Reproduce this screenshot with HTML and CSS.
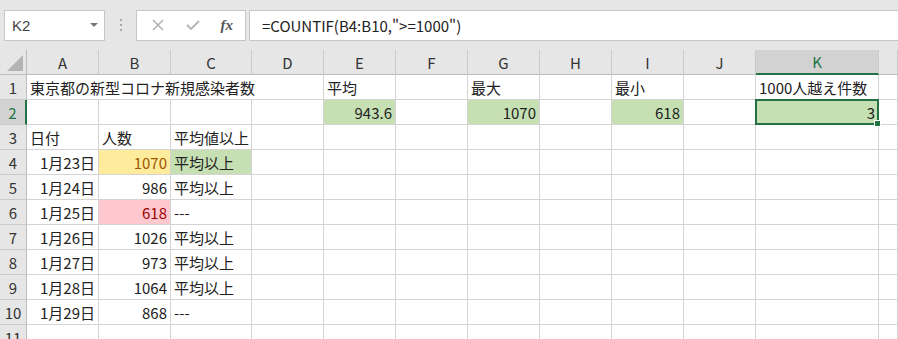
FILE: index.html
```html
<!DOCTYPE html>
<html lang="ja">
<head>
    <meta charset="UTF-8">
    <title>COUNTIF</title>
    <link rel="stylesheet" href="styles.css">
</head>
<body>
    <div class="toolbar">
        <div class="namebox">
            <span>K2</span>
            <span class="caret"></span>
        </div>
        <div class="grip"><i></i><i></i><i></i></div>
        <div class="fxbox">
            <svg width="14" height="14" viewBox="0 0 14 14"><path d="M2 2L12 12M12 2L2 12" stroke="#b4b4b4" stroke-width="1.6" fill="none"/></svg>
            <svg width="16" height="14" viewBox="0 0 16 14"><path d="M2 7L6 11L14 3" stroke="#b4b4b4" stroke-width="1.8" fill="none"/></svg>
            <span class="fx">fx</span>
        </div>
        <div class="formula">=COUNTIF(B4:B10,"&gt;=1000")</div>
    </div>

    <div class="sheet">
        <div class="corner"><span></span></div>
        <div class="ch">A</div><div class="ch">B</div><div class="ch">C</div><div class="ch">D</div>
        <div class="ch">E</div><div class="ch">F</div><div class="ch">G</div><div class="ch">H</div>
        <div class="ch">I</div><div class="ch">J</div><div class="ch active">K</div><div class="ch"></div>

        <div class="rh">1</div>
        <div class="c wide">東京都の新型コロナ新規感染者数</div>
        <div class="c">平均</div><div class="c"></div><div class="c">最大</div><div class="c"></div>
        <div class="c">最小</div><div class="c"></div><div class="c">1000人越え件数</div><div class="c"></div>

        <div class="rh active">2</div>
        <div class="c"></div><div class="c"></div><div class="c"></div><div class="c"></div>
        <div class="c num green">943.6</div><div class="c"></div>
        <div class="c num green">1070</div><div class="c"></div>
        <div class="c num green">618</div><div class="c"></div>
        <div class="c num green selected">3</div><div class="c"></div>

        <div class="rh">3</div>
        <div class="c">日付</div><div class="c">人数</div><div class="c">平均値以上</div>
        <div class="c"></div><div class="c"></div><div class="c"></div><div class="c"></div><div class="c"></div>
        <div class="c"></div><div class="c"></div><div class="c"></div><div class="c"></div>

        <div class="rh">4</div>
        <div class="c num">1月23日</div><div class="c num neutral">1070</div><div class="c green">平均以上</div>
        <div class="c"></div><div class="c"></div><div class="c"></div><div class="c"></div><div class="c"></div>
        <div class="c"></div><div class="c"></div><div class="c"></div><div class="c"></div>

        <div class="rh">5</div>
        <div class="c num">1月24日</div><div class="c num">986</div><div class="c">平均以上</div>
        <div class="c"></div><div class="c"></div><div class="c"></div><div class="c"></div><div class="c"></div>
        <div class="c"></div><div class="c"></div><div class="c"></div><div class="c"></div>

        <div class="rh">6</div>
        <div class="c num">1月25日</div><div class="c num bad">618</div><div class="c">---</div>
        <div class="c"></div><div class="c"></div><div class="c"></div><div class="c"></div><div class="c"></div>
        <div class="c"></div><div class="c"></div><div class="c"></div><div class="c"></div>

        <div class="rh">7</div>
        <div class="c num">1月26日</div><div class="c num">1026</div><div class="c">平均以上</div>
        <div class="c"></div><div class="c"></div><div class="c"></div><div class="c"></div><div class="c"></div>
        <div class="c"></div><div class="c"></div><div class="c"></div><div class="c"></div>

        <div class="rh">8</div>
        <div class="c num">1月27日</div><div class="c num">973</div><div class="c">平均以上</div>
        <div class="c"></div><div class="c"></div><div class="c"></div><div class="c"></div><div class="c"></div>
        <div class="c"></div><div class="c"></div><div class="c"></div><div class="c"></div>

        <div class="rh">9</div>
        <div class="c num">1月28日</div><div class="c num">1064</div><div class="c">平均以上</div>
        <div class="c"></div><div class="c"></div><div class="c"></div><div class="c"></div><div class="c"></div>
        <div class="c"></div><div class="c"></div><div class="c"></div><div class="c"></div>

        <div class="rh">10</div>
        <div class="c num">1月29日</div><div class="c num">868</div><div class="c">---</div>
        <div class="c"></div><div class="c"></div><div class="c"></div><div class="c"></div><div class="c"></div>
        <div class="c"></div><div class="c"></div><div class="c"></div><div class="c"></div>

        <div class="rh">11</div>
        <div class="c"></div><div class="c"></div><div class="c"></div><div class="c"></div>
        <div class="c"></div><div class="c"></div><div class="c"></div><div class="c"></div><div class="c"></div>
        <div class="c"></div><div class="c"></div><div class="c"></div>
    </div>
</body>
</html>
```

FILE: styles.css
```css
body {
    margin: 0;
    background-color: #ffffff;
    font-family: "Noto Sans CJK JP", "Noto Sans", sans-serif;
    color: #222;
    overflow: hidden;
}
.toolbar {
    height: 50px;
    background-color: #e6e6e6;
    display: flex;
    align-items: center;
    padding-left: 4px;
    box-sizing: border-box;
}
.namebox {
    width: 101px;
    height: 31px;
    background-color: #fff;
    border: 1px solid #c6c6c6;
    box-sizing: border-box;
    display: flex;
    align-items: center;
    justify-content: space-between;
    padding: 0 6px 0 7px;
    font-family: "Liberation Sans", sans-serif;
    font-size: 15px;
    color: #444;
}
.caret {
    width: 0;
    height: 0;
    border-left: 4px solid transparent;
    border-right: 4px solid transparent;
    border-top: 4px solid #777;
}
.grip {
    width: 31px;
    display: flex;
    flex-direction: column;
    align-items: center;
    gap: 3px;
}
.grip i {
    width: 2px;
    height: 2px;
    background-color: #a8a8a8;
}
.fxbox {
    width: 110px;
    height: 31px;
    background-color: #fff;
    border: 1px solid #c6c6c6;
    box-sizing: border-box;
    display: flex;
    align-items: center;
    justify-content: space-between;
    padding: 0 12px 0 14px;
}
.fx {
    font-family: "Liberation Serif", serif;
    font-style: italic;
    font-weight: bold;
    font-size: 15px;
    color: #555;
}
.formula {
    flex-grow: 1;
    height: 31px;
    margin-left: 3px;
    background-color: #fff;
    border: 1px solid #c6c6c6;
    border-right: none;
    box-sizing: border-box;
    display: flex;
    align-items: center;
    padding-left: 12px;
    font-size: 15px;
    color: #222;
}
.sheet {
    display: grid;
    grid-template-columns: 27px 72px 72px 81px repeat(7, 72px) 123px 1fr;
    grid-auto-rows: 25px;
}
.corner {
    background-color: #e6e6e6;
    border-right: 1px solid #bdbdbd;
    border-bottom: 1px solid #bdbdbd;
    box-sizing: border-box;
    display: flex;
    align-items: flex-end;
    justify-content: flex-end;
    padding: 0 3px 3px 0;
}
.corner span {
    width: 0;
    height: 0;
    border-left: 16px solid transparent;
    border-bottom: 16px solid #b4b4b4;
}
.ch {
    background-color: #e6e6e6;
    border-right: 1px solid #cacaca;
    border-bottom: 1px solid #bdbdbd;
    box-sizing: border-box;
    display: flex;
    align-items: center;
    justify-content: center;
    font-size: 15px;
    color: #333;
}
.ch.active {
    background-color: #d2d2d2;
    color: #217346;
    border-bottom: 2px solid #217346;
}
.rh {
    background-color: #e6e6e6;
    border-right: 1px solid #bdbdbd;
    border-bottom: 1px solid #cacaca;
    box-sizing: border-box;
    display: flex;
    align-items: center;
    justify-content: center;
    font-size: 15px;
    color: #333;
}
.rh.active {
    background-color: #d2d2d2;
    color: #217346;
    border-right: 2px solid #217346;
}
.c {
    border-right: 1px solid #d4d4d4;
    border-bottom: 1px solid #d4d4d4;
    box-sizing: border-box;
    display: flex;
    align-items: center;
    padding: 1px 3px 0 3px;
    font-size: 15px;
    white-space: nowrap;
    color: #222;
}
.c.wide {
    grid-column: span 4;
}
.c.num {
    justify-content: flex-end;
}
.c.green {
    background-color: #c6e0b4;
}
.c.neutral {
    background-color: #ffeb9c;
    color: #9c5700;
}
.c.bad {
    background-color: #ffc7ce;
    color: #9c0006;
}
.c.selected {
    position: relative;
}
.c.selected::after {
    content: "";
    position: absolute;
    left: -1px;
    top: -1px;
    right: -1px;
    bottom: -1px;
    border: 2px solid #217346;
}
.c.selected::before {
    content: "";
    position: absolute;
    right: -3px;
    bottom: -3px;
    width: 5px;
    height: 5px;
    background-color: #217346;
    border: 1px solid #fff;
    z-index: 1;
}
```
